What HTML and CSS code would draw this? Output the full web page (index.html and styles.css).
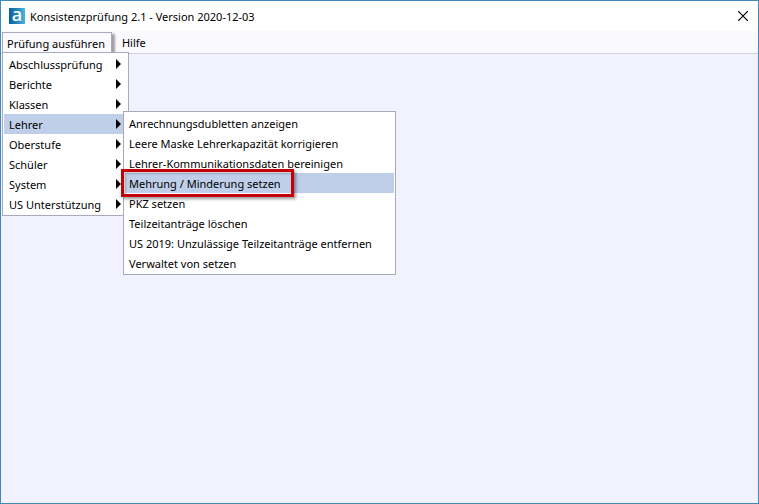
FILE: index.html
```html
<!DOCTYPE html>
<html lang="de">
<head>
    <meta charset="UTF-8">
    <meta name="viewport" content="width=device-width, initial-scale=1.0">
    <title>Konsistenzprüfung 2.1 - Version 2020-12-03</title>
    <link rel="stylesheet" href="styles.css">
</head>
<body>
    <div class="window">
        <header class="titlebar">
            <svg class="app-icon" width="16" height="16" viewBox="0 0 16 16" aria-hidden="true">
                <defs>
                    <linearGradient id="iconFill" x1="0" y1="0" x2="1" y2="0">
                        <stop offset="0" stop-color="#0a5f9e"/>
                        <stop offset="0.5" stop-color="#1f86bd"/>
                        <stop offset="1" stop-color="#4fb3dc"/>
                    </linearGradient>
                </defs>
                <rect width="16" height="16" fill="url(#iconFill)"/>
                <text class="icon-letter" x="8" y="13" text-anchor="middle">a</text>
            </svg>
            <h1 class="title">Konsistenzprüfung 2.1 - Version 2020-12-03</h1>
            <button type="button" class="close-btn" aria-label="Schließen">
                <svg width="10" height="10" viewBox="0 0 10 10">
                    <path d="M0 0L10 10M10 0L0 10" stroke="#000" stroke-width="1.2"/>
                </svg>
            </button>
        </header>

        <nav class="menubar">
            <div class="menu">
                <button type="button" class="menu-btn open" aria-expanded="true">Prüfung ausführen</button>
                <ul class="dropdown">
                    <li><button type="button" class="item parent">Abschlussprüfung</button></li>
                    <li><button type="button" class="item parent">Berichte</button></li>
                    <li><button type="button" class="item parent">Klassen</button></li>
                    <li class="has-submenu">
                        <button type="button" class="item parent selected" aria-expanded="true">Lehrer</button>
                        <ul class="submenu">
                            <li><button type="button" class="item">Anrechnungsdubletten anzeigen</button></li>
                            <li><button type="button" class="item">Leere Maske Lehrerkapazität korrigieren</button></li>
                            <li><button type="button" class="item">Lehrer-Kommunikationsdaten bereinigen</button></li>
                            <li><button type="button" class="item selected marked">Mehrung / Minderung setzen</button></li>
                            <li><button type="button" class="item">PKZ setzen</button></li>
                            <li><button type="button" class="item">Teilzeitanträge löschen</button></li>
                            <li><button type="button" class="item">US 2019: Unzulässige Teilzeitanträge entfernen</button></li>
                            <li><button type="button" class="item">Verwaltet von setzen</button></li>
                        </ul>
                    </li>
                    <li><button type="button" class="item parent">Oberstufe</button></li>
                    <li><button type="button" class="item parent">Schüler</button></li>
                    <li><button type="button" class="item parent">System</button></li>
                    <li><button type="button" class="item parent">US Unterstützung</button></li>
                </ul>
            </div>
            <div class="menu">
                <button type="button" class="menu-btn">Hilfe</button>
            </div>
        </nav>

        <main class="content"></main>
    </div>
</body>
</html>
```

FILE: styles.css
```css
*,
*::before,
*::after {
    margin: 0;
    padding: 0;
    box-sizing: border-box;
}

body {
    font-family: 'Noto Sans', 'Open Sans', sans-serif;
    font-size: 11px;
    color: #000;
}

button {
    font: inherit;
    color: inherit;
    background: none;
    border: none;
}

ul {
    list-style: none;
}

.window {
    display: flex;
    flex-direction: column;
    min-height: 100vh;
    border: 1px solid #3f8abb;
    background: #f2f2ff;
}

.titlebar {
    display: flex;
    align-items: center;
    height: 30px;
    padding: 0 10px 0 8px;
    background: #fff;
}

.app-icon {
    overflow: visible;
}

.icon-letter {
    font-family: 'Open Sans', sans-serif;
    font-size: 18px;
    font-weight: 600;
    fill: #fff;
}

.title {
    flex: 1;
    margin-left: 5px;
    font-size: 11px;
    font-weight: 400;
}

.close-btn {
    display: flex;
    padding: 0;
}

.menubar {
    display: flex;
    height: 23px;
    padding: 1px 1px 0;
    background: #f9f9fe;
    border-bottom: 1px solid #d0d0e2;
}

.menu {
    position: relative;
}

.menu-btn {
    height: 21px;
    padding: 0 10px;
    line-height: 21px;
    white-space: nowrap;
}

.menu-btn.open {
    padding: 0 6px 0 4px;
    line-height: 19px;
    border: 1px solid #a9a9bd;
    border-bottom: none;
    box-shadow: 3px 2px 2px rgba(0, 0, 0, 0.35);
    background: #f9f9fe;
}

.dropdown,
.submenu {
    position: absolute;
    padding: 1px;
    background: #fff;
    border: 1px solid #a9a9bd;
}

.dropdown {
    top: 20px;
    left: 0;
    width: 127px;
}

.submenu {
    top: -3px;
    left: 119px;
    z-index: 1;
    width: 273px;
}

.has-submenu {
    position: relative;
}

.item {
    display: block;
    position: relative;
    width: 100%;
    height: 20px;
    padding: 1px 4px 0;
    line-height: 19px;
    text-align: left;
    white-space: nowrap;
}

.parent {
    padding-left: 5px;
}

.parent::after {
    content: '';
    position: absolute;
    top: 5px;
    right: 6px;
    border: 5px solid transparent;
    border-left: 5px solid #000;
    border-right: none;
}

.selected,
.item:hover {
    background: #bfcfe9;
}

.marked::before {
    content: '';
    position: absolute;
    top: -4px;
    left: -4px;
    width: 173px;
    height: 28px;
    border: 3px solid #c40008;
    box-shadow: 2px 2px 3px rgba(0, 0, 0, 0.4), inset 2px 2px 2px rgba(0, 0, 0, 0.2);
    z-index: 1;
}

.content {
    flex: 1;
}
```
